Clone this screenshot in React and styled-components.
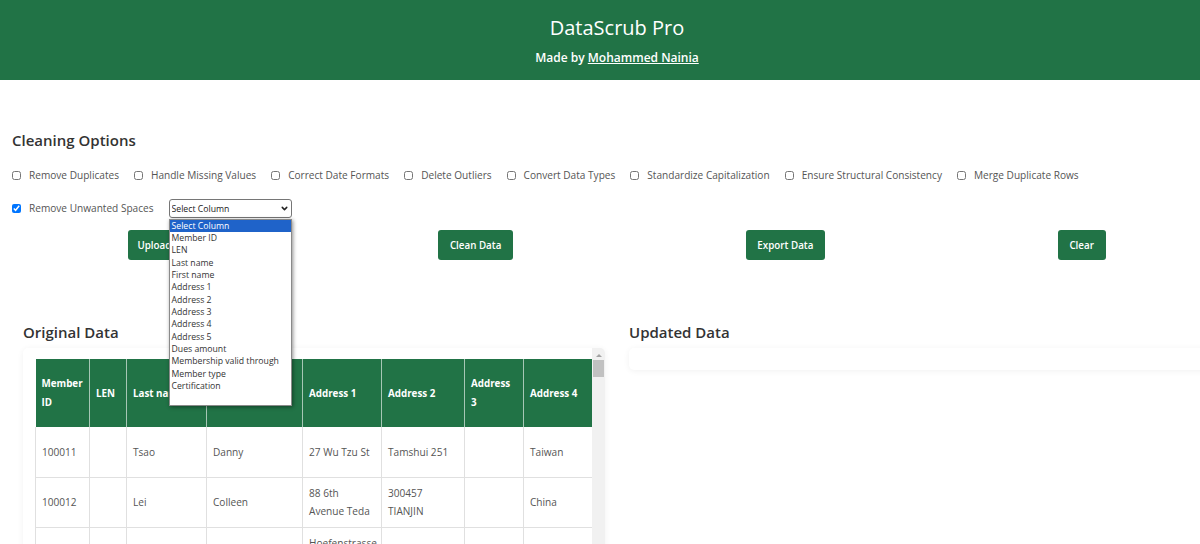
import React from 'react';
import styled, { createGlobalStyle } from 'styled-components';
import { ChevronDown } from 'lucide-react';

const GlobalStyle = createGlobalStyle`
  html, body {
    margin: 0;
    padding: 0;
    width: 1200px;
    height: 544px;
    overflow: hidden;
    background: #fff;
  }
  body {
    font-family: "Open Sans", "Noto Sans", sans-serif;
    color: #333;
  }
`;

const Page = styled.div`
  width: 1234px;
`;

const Header = styled.header`
  height: 80px;
  background: #217346;
  color: #fff;
  text-align: center;
  padding-top: 14px;
  box-sizing: border-box;
`;

const Title = styled.h1`
  margin: 0;
  font-size: 20px;
  line-height: 27px;
  font-weight: 400;
`;

const Credit = styled.p`
  margin: 8px 0 0;
  font-size: 12px;
  line-height: 17px;
  font-weight: 600;
  a {
    color: #fff;
    text-decoration: underline;
  }
`;

const Options = styled.section`
  padding: 47px 12px 0;
`;

const Heading = styled.h2`
  margin: 0;
  font-size: 15px;
  line-height: 26px;
  font-weight: 600;
  color: #333;
`;

const OptionRow = styled.div`
  display: flex;
  align-items: center;
  gap: ${(p) => p.$gap || 15}px;
  height: 20px;
  margin-top: ${(p) => p.$top}px;
`;

const Option = styled.label`
  display: flex;
  align-items: center;
  gap: 8px;
  font-size: 10.1px;
  color: #555;
  white-space: nowrap;
  input {
    width: 9px;
    height: 9px;
    margin: 0;
  }
`;

const SelectWrap = styled.div`
  position: relative;
  width: 123px;
`;

const ColumnSelect = styled.select`
  display: block;
  width: 123px;
  height: 19px;
  padding: 1px 0 0 2px;
  appearance: none;
  font-family: inherit;
  font-size: 8.7px;
  color: #222;
  background: #fff;
  border: 1px solid #767676;
  border-radius: 3px;
`;

const SelectArrow = styled(ChevronDown)`
  position: absolute;
  top: 5px;
  right: 3px;
  width: 9px;
  height: 9px;
  color: #222;
  pointer-events: none;
`;

const DropList = styled.ul`
  position: absolute;
  top: 20px;
  left: 0;
  z-index: 5;
  width: 123px;
  height: 187px;
  margin: 0;
  padding: 0;
  box-sizing: border-box;
  list-style: none;
  background: #fff;
  border: 1px solid #8a8a8a;
  box-shadow: 1px 1px 4px rgba(0, 0, 0, 0.45);
`;

const DropItem = styled.li`
  height: 12.35px;
  line-height: 12.35px;
  padding-left: 2px;
  font-size: 8.7px;
  white-space: nowrap;
  color: ${(p) => (p.$active ? '#fff' : '#333')};
  background: ${(p) => (p.$active ? '#1f63c9' : 'transparent')};
`;

const Actions = styled.div`
  display: flex;
  justify-content: space-around;
  margin-top: 12px;
`;

const ActionButton = styled.button`
  height: 30px;
  width: ${(p) => p.$width}px;
  padding: 0;
  font-family: inherit;
  font-size: 9.8px;
  font-weight: 600;
  color: #fff;
  background: #217346;
  border: none;
  border-radius: 3px;
`;

const DataGrid = styled.section`
  display: grid;
  grid-template-columns: 582px 582px;
  gap: 24px;
  padding: 60px 0 0 23px;
`;

const PanelTitle = styled.h2`
  margin: 0 0 4px;
  font-size: 15px;
  line-height: 24px;
  font-weight: 600;
  color: #333;
`;

const Panel = styled.div`
  display: flex;
  height: ${(p) => p.$height}px;
  border-radius: 5px;
  background: #fff;
  box-shadow: 0 1px 6px rgba(0, 0, 0, 0.06);
`;

const TableClip = styled.div`
  flex: 1;
  padding: 11px 0 0 12px;
  overflow: hidden;
`;

const Table = styled.table`
  width: 556px;
  table-layout: fixed;
  border-collapse: collapse;
  font-size: 10.1px;
  color: #555;
`;

const Th = styled.th`
  height: 68px;
  padding: 0 6px;
  box-sizing: border-box;
  text-align: left;
  font-size: 9.8px;
  line-height: 19px;
  font-weight: 700;
  color: #fff;
  background: #217346;
  border-left: 1px solid #a6c7b5;
  &:first-child {
    border-left: none;
  }
`;

const Td = styled.td`
  height: 50px;
  padding: 6px;
  box-sizing: border-box;
  line-height: 18.5px;
  border: 1px solid #e0e0e0;
  border-top: none;
  border-right: none;
  vertical-align: ${(p) => (p.$top ? 'top' : 'middle')};
`;

const ScrollTrack = styled.div`
  width: 13px;
  background: #f1f1f1;
  border-radius: 0 5px 0 0;
`;

const ScrollArrow = styled.div`
  width: 0;
  height: 0;
  margin: 6px auto 3px;
  border-left: 3px solid transparent;
  border-right: 3px solid transparent;
  border-bottom: 3px solid #a3a3a3;
`;

const ScrollThumb = styled.div`
  width: 11px;
  height: 17px;
  margin: 0 auto;
  background: #c1c1c1;
`;

const columns = [
  { label: 'Member ID', width: 54 },
  { label: 'LEN', width: 37 },
  { label: 'Last name', width: 80 },
  { label: 'First name', width: 96 },
  { label: 'Address 1', width: 79 },
  { label: 'Address 2', width: 83 },
  { label: 'Address 3', width: 59 },
  { label: 'Address 4', width: 68 },
];

const rows = [
  ['100011', '', 'Tsao', 'Danny', '27 Wu Tzu St', 'Tamshui 251', '', 'Taiwan'],
  ['100012', '', 'Lei', 'Colleen', '88 6th Avenue Teda', '300457 TIANJIN', '', 'China'],
];

const selectOptions = [
  'Select Column', 'Member ID', 'LEN', 'Last name', 'First name', 'Address 1', 'Address 2',
  'Address 3', 'Address 4', 'Address 5', 'Dues amount', 'Membership valid through',
  'Member type', 'Certification',
];

const firstRowOptions = [
  'Remove Duplicates', 'Handle Missing Values', 'Correct Date Formats', 'Delete Outliers',
  'Convert Data Types', 'Standardize Capitalization', 'Ensure Structural Consistency',
  'Merge Duplicate Rows',
];

export default function App() {
  return (
    <Page>
      <GlobalStyle />
      <Header>
        <Title>DataScrub Pro</Title>
        <Credit>Made by <a href="#author">Mohammed Nainia</a></Credit>
      </Header>

      <Options>
        <Heading>Cleaning Options</Heading>
        <OptionRow $top={12}>
          {firstRowOptions.map((name) => (
            <Option key={name}>
              <input type="checkbox" />
              {name}
            </Option>
          ))}
        </OptionRow>
        <OptionRow $top={13} $gap={15}>
          <Option>
            <input type="checkbox" defaultChecked />
            Remove Unwanted Spaces
          </Option>
          <SelectWrap>
            <ColumnSelect>
              <option>Select Column</option>
            </ColumnSelect>
            <SelectArrow strokeWidth={4} />
            <DropList>
              {selectOptions.map((name, i) => (
                <DropItem key={name} $active={i === 0}>{name}</DropItem>
              ))}
            </DropList>
          </SelectWrap>
        </OptionRow>
        <Actions>
          <ActionButton $width={77}>Upload Data</ActionButton>
          <ActionButton $width={75}>Clean Data</ActionButton>
          <ActionButton $width={79}>Export Data</ActionButton>
          <ActionButton $width={48}>Clear</ActionButton>
        </Actions>
      </Options>

      <DataGrid>
        <div>
          <PanelTitle>Original Data</PanelTitle>
          <Panel $height={400}>
            <TableClip>
              <Table>
                <colgroup>
                  {columns.map((col) => (
                    <col key={col.label} style={{ width: col.width }} />
                  ))}
                </colgroup>
                <thead>
                  <tr>
                    {columns.map((col) => (
                      <Th key={col.label}>{col.label}</Th>
                    ))}
                  </tr>
                </thead>
                <tbody>
                  {rows.map((row) => (
                    <tr key={row[0]}>
                      {row.map((cell, i) => (
                        <Td key={i}>{cell}</Td>
                      ))}
                    </tr>
                  ))}
                  <tr>
                    <Td></Td>
                    <Td></Td>
                    <Td></Td>
                    <Td></Td>
                    <Td $top>Hoefenstrasse</Td>
                    <Td></Td>
                    <Td></Td>
                    <Td></Td>
                  </tr>
                </tbody>
              </Table>
            </TableClip>
            <ScrollTrack>
              <ScrollArrow />
              <ScrollThumb />
            </ScrollTrack>
          </Panel>
        </div>
        <div>
          <PanelTitle>Updated Data</PanelTitle>
          <Panel $height={22} />
        </div>
      </DataGrid>
    </Page>
  );
}
